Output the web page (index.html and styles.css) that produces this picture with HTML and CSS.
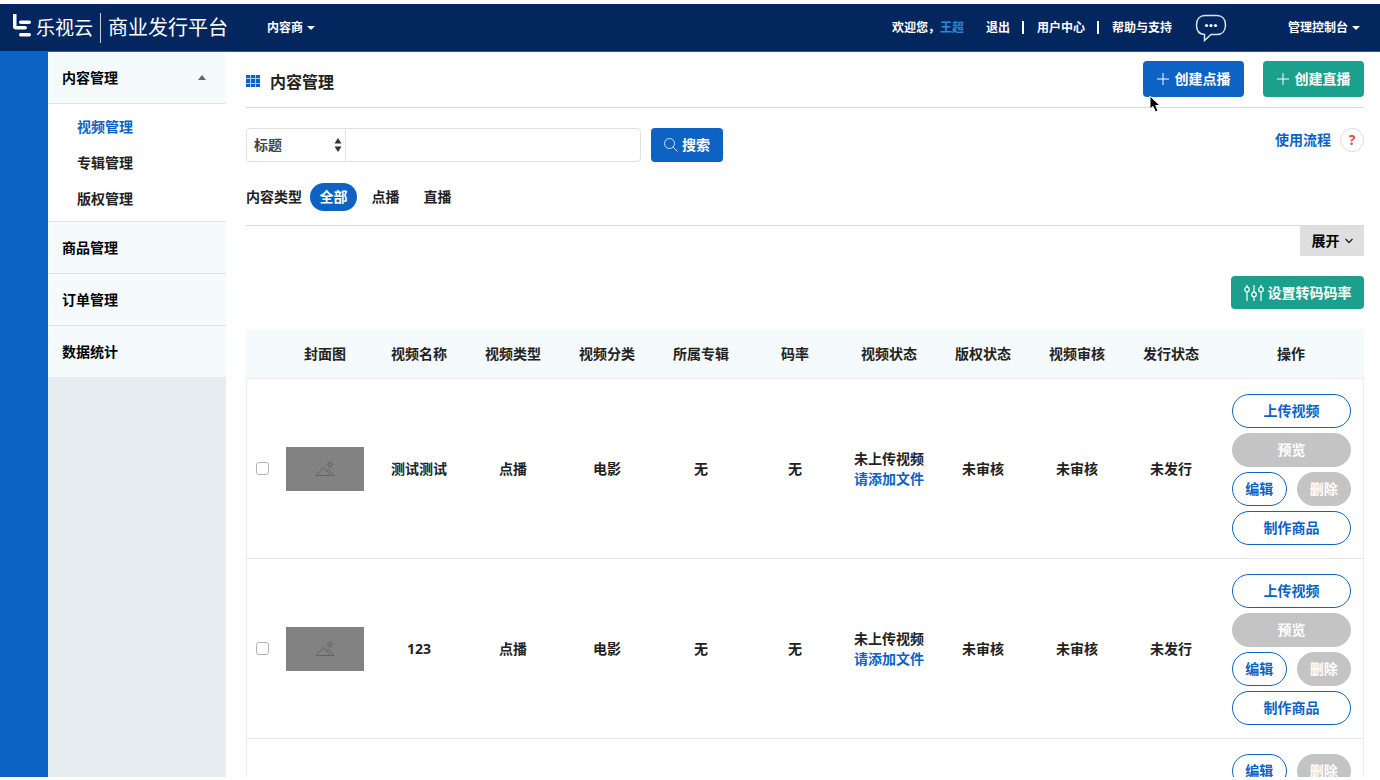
FILE: index.html
```html
<!DOCTYPE html>
<html lang="zh-CN">
<head>
<meta charset="utf-8">
<title>内容管理</title>
<link rel="stylesheet" href="styles.css">
</head>
<body>
<svg class="defs" aria-hidden="true">
  <symbol id="picture" viewBox="0 0 20 16">
    <path d="M1 14.500 8.500 6.500 15.500 14.500ZM11.500 10 13.500 8.500 19 14.500H15.500" />
    <circle cx="15" cy="3.500" r="1.700" />
    <path d="M15 0v1M15 6v1M11.500 3.500h1M17.500 3.500h1M12.500 1l.7.7M16.800 5.300l.7.7M17.500 1l-.7.7M13.200 5.300l-.7.7" />
  </symbol>
</svg>
<header class="topbar">
  <a class="brand" href="#">
    <svg class="brand-mark" viewBox="0 0 20 28" aria-hidden="true"><path d="M1 0H4.500V12H13Q15 12 15 13.700T13 15.500H4Q1 15.500 1 12.500Z"/><rect x="7" y="6.500" width="12" height="3.500" rx="1.700"/><rect x="7" y="19" width="12" height="3.500" rx="1.700"/></svg>
    <span class="brand-name">乐视云</span>
    <span class="brand-product">商业发行平台</span>
  </a>
  <button class="top-menu" type="button">内容商<i class="caret"></i></button>
  <nav class="user-nav">
    <span class="welcome">欢迎您，<a class="user" href="#">王超</a></span>
    <a href="#">退出</a><span class="bar"></span>
    <a href="#">用户中心</a><span class="bar"></span>
    <a href="#">帮助与支持</a>
  </nav>
  <button class="chat" type="button" aria-label="消息">
    <svg viewBox="0 0 32 28" aria-hidden="true"><path class="bubble" d="M10 1.500H22C27 1.500 30.500 5 30.500 11S27 20.500 22 20.500H16L9.500 26.500V20.500C4.500 20.300 1.500 17 1.500 11S5 1.500 10 1.500Z"/><circle cx="11.500" cy="11.500" r="1.600"/><circle cx="16" cy="11.500" r="1.600"/><circle cx="20.500" cy="11.500" r="1.600"/></svg>
  </button>
  <button class="top-menu" type="button">管理控制台<i class="caret"></i></button>
</header>
<div class="shell">
  <div class="rail"></div>
  <nav class="sidebar">
    <a class="section" href="#">内容管理<i class="caret-up"></i></a>
    <div class="submenu">
      <a class="current" href="#">视频管理</a>
      <a href="#">专辑管理</a>
      <a href="#">版权管理</a>
    </div>
    <a class="section" href="#">商品管理</a>
    <a class="section" href="#">订单管理</a>
    <a class="section" href="#">数据统计</a>
  </nav>
  <main class="content">
    <div class="page-head">
      <svg class="grid-icon" viewBox="0 0 14 12" aria-hidden="true"><path d="M0 0h4v3H0zM5 0h4v3H5zM10 0h4v3h-4zM0 4h4v4H0zM5 4h4v4H5zM10 4h4v4h-4zM0 9h4v3H0zM5 9h4v3H5zM10 9h4v3h-4z"/></svg>
      <h1>内容管理</h1>
      <div class="head-actions">
        <button class="btn create" type="button"><svg class="plus" viewBox="0 0 12 12" aria-hidden="true"><path d="M6 0V12M0 6H12"/></svg>创建点播</button>
        <button class="btn create green" type="button"><svg class="plus" viewBox="0 0 12 12" aria-hidden="true"><path d="M6 0V12M0 6H12"/></svg>创建直播</button>
        <svg class="pointer" viewBox="0 0 12 18" aria-hidden="true"><path d="M1 1V14L4 11.500 6.500 17 9 16 6.800 10.500H11Z"/></svg>
      </div>
    </div>
    <form class="search">
      <div class="select-wrap">
        <select aria-label="搜索字段"><option>标题</option></select>
        <svg class="updown" viewBox="0 0 8 14" aria-hidden="true"><path d="M4 0 7.500 5.500H.5ZM4 14 7.500 8.500H.5Z"/></svg>
      </div>
      <input class="keyword" type="text" aria-label="关键词">
      <button class="btn search-btn" type="button"><svg class="lens" viewBox="0 0 14 14" aria-hidden="true"><circle cx="5.500" cy="5.500" r="5"/><path d="M9 9 13.500 13.500"/></svg>搜索</button>
      <div class="help"><a href="#">使用流程</a><button class="help-mark" type="button">?</button></div>
    </form>
    <div class="filters">
      <span>内容类型</span>
      <button class="chip active" type="button">全部</button>
      <button class="chip" type="button">点播</button>
      <button class="chip" type="button">直播</button>
    </div>
    <div class="expand-row">
      <button class="expand" type="button">展开<svg viewBox="0 0 8 6" aria-hidden="true"><path d="M.5 1 4 4.500 7.500 1"/></svg></button>
    </div>
    <div class="tools">
      <button class="btn green rate" type="button"><svg viewBox="0 0 20 16" aria-hidden="true"><path d="M3 0V2M3 7V16M10 0V7M10 12V16M17 0V2M17 7V16"/><circle cx="3" cy="4.500" r="2.300"/><circle cx="10" cy="9.500" r="2.300"/><circle cx="17" cy="4.500" r="2.300"/></svg>设置转码码率</button>
    </div>
    <table class="videos">
      <colgroup><col class="col-check"><col><col><col><col><col><col><col><col><col><col><col class="col-ops"></colgroup>
      <thead>
        <tr><th></th><th>封面图</th><th>视频名称</th><th>视频类型</th><th>视频分类</th><th>所属专辑</th><th>码率</th><th>视频状态</th><th>版权状态</th><th>视频审核</th><th>发行状态</th><th>操作</th></tr>
      </thead>
      <tbody>
        <tr>
          <td><input type="checkbox" aria-label="选择 测试测试"></td>
          <td><div class="thumb"><svg><use href="#picture"/></svg></div></td>
          <td>测试测试</td><td>点播</td><td>电影</td><td>无</td><td>无</td>
          <td>未上传视频<a href="#">请添加文件</a></td>
          <td>未审核</td><td>未审核</td><td>未发行</td>
          <td><div class="ops"><button class="wide" type="button">上传视频</button><button class="wide" type="button" disabled>预览</button><button type="button">编辑</button><button type="button" disabled>删除</button><button class="wide" type="button">制作商品</button></div></td>
        </tr>
        <tr>
          <td><input type="checkbox" aria-label="选择 123"></td>
          <td><div class="thumb"><svg><use href="#picture"/></svg></div></td>
          <td>123</td><td>点播</td><td>电影</td><td>无</td><td>无</td>
          <td>未上传视频<a href="#">请添加文件</a></td>
          <td>未审核</td><td>未审核</td><td>未发行</td>
          <td><div class="ops"><button class="wide" type="button">上传视频</button><button class="wide" type="button" disabled>预览</button><button type="button">编辑</button><button type="button" disabled>删除</button><button class="wide" type="button">制作商品</button></div></td>
        </tr>
        <tr>
          <td></td><td></td><td></td><td></td><td></td><td></td><td></td><td></td><td></td><td></td><td></td>
          <td><div class="ops"><button type="button">编辑</button><button type="button" disabled>删除</button></div></td>
        </tr>
      </tbody>
    </table>
  </main>
</div>
</body>
</html>
```

FILE: styles.css
```css
* { box-sizing: border-box; }

body {
  margin: 0;
  padding: 4px 0 3px;
  height: 100vh;
  display: flex;
  flex-direction: column;
  overflow: hidden;
  background: #fff;
  color: #222;
  font: bold 14px/20px "Noto Sans", "Noto Sans CJK SC", sans-serif;
}

a { color: inherit; text-decoration: none; }
button, input, select { font: inherit; color: inherit; margin: 0; }
button { padding: 0; border: 0; background: none; white-space: nowrap; }
svg { display: block; flex: none; }
.defs { position: absolute; width: 0; height: 0; }

/* Top bar */
.topbar {
  flex: none;
  display: flex;
  align-items: center;
  height: 48px;
  padding: 0 20px 0 12px;
  background: #04265e;
  border-bottom: 1px solid #3d5680;
  color: #fff;
  font-size: 12px;
}
.brand { display: flex; align-items: center; margin-right: 39px; font-weight: 400; }
.brand-mark { width: 20px; height: 28px; margin-right: 4px; fill: #fff; }
.brand-name { padding-right: 7px; border-right: 1px solid #c3cddd; font-size: 19px; line-height: 30px; }
.brand-product { margin-left: 7px; font-size: 20px; }
.top-menu { display: flex; align-items: center; gap: 4px; }
.caret { border: 4px solid transparent; border-top-color: #fff; border-bottom: 0; }
.user-nav { display: flex; align-items: center; margin-left: auto; gap: 12px; }
.welcome { margin-right: 10px; }
.user { color: #2b8ad6; }
.bar { width: 2px; height: 13px; margin-right: 1px; background: #fff; }
.chat { margin: 0 61px 0 23px; }
.chat svg { width: 32px; height: 28px; fill: #fff; }
.chat .bubble { fill: none; stroke: #dce6f3; stroke-width: 1.5; }

/* Frame */
.shell { flex: 1; display: flex; min-height: 0; overflow: hidden; }
.rail { flex: none; width: 48px; background: #0d63c3; }
.sidebar { flex: none; width: 178px; background: #e6edf1; color: #000; }
.section {
  display: flex;
  align-items: center;
  justify-content: space-between;
  height: 52px;
  padding: 0 20px 0 14px;
  border-bottom: 1px solid #dfe3e6;
  background: #f5fafc;
}
.section:last-child { border-bottom-color: #e6edf1; }
.caret-up { border: 4px solid transparent; border-bottom: 5px solid #666; border-top: 0; }
.submenu { padding: 5px 0 4px 29px; border-bottom: 1px solid #dfe3e6; background: #fff; color: #222; }
.submenu a { display: block; line-height: 36px; }
.submenu .current { color: #0d63c3; }

.content { flex: 1; min-width: 0; padding: 0 16px 0 20px; }

/* Page heading */
.page-head { display: flex; align-items: center; height: 56px; padding-top: 2px; border-bottom: 1px solid #d9d9d9; }
.grid-icon { width: 14px; height: 12px; fill: #0d63c3; background: #a5cbf0; }
h1 { margin: 2px 0 0 10px; font-size: 16px; line-height: 24px; }
.head-actions { position: relative; display: flex; gap: 19px; margin-left: auto; padding-bottom: 4px; }
.btn {
  display: flex;
  align-items: center;
  justify-content: center;
  border-radius: 4px;
  background: #0d63c3;
  color: #fff;
}
.green { background: #1ba08e; }
.create { width: 101px; height: 36px; gap: 6px; }
.plus { width: 12px; height: 12px; stroke: #fff; fill: none; }
.pointer { position: absolute; left: 6px; top: 34px; width: 12px; height: 18px; fill: #000; stroke: #fff; }

/* Search */
.search { display: flex; align-items: center; margin-top: 20px; }
.select-wrap { position: relative; width: 100px; }
.search select, .keyword { display: block; height: 34px; border: 1px solid #e0e0e0; background: #fff; color: #444; outline: 0; }
.search select { width: 100%; padding: 0 7px; border-radius: 4px 0 0 4px; appearance: none; }
.updown { position: absolute; right: 4px; top: 10px; width: 8px; height: 14px; fill: #333; pointer-events: none; }
.keyword { width: 296px; margin-left: -1px; padding: 0 8px; border-radius: 0 4px 4px 0; }
.search-btn { width: 72px; height: 34px; margin-left: 10px; gap: 4px; }
.lens { width: 14px; height: 14px; fill: none; stroke: #cfe2f7; }
.help { display: flex; align-items: center; gap: 9px; margin-left: auto; padding-bottom: 10px; color: #0d63c3; }
.help-mark { width: 24px; height: 24px; border: 1px solid #ddd; border-radius: 50%; color: #d9534f; }

/* Filters */
.filters { display: flex; align-items: center; gap: 5px; margin-top: 21px; padding-bottom: 14px; border-bottom: 1px solid #d9d9d9; }
.filters span { margin-right: 3px; }
.chip { width: 47px; height: 28px; border-radius: 14px; }
.active { background: #0d63c3; color: #fff; }
.expand-row, .tools { display: flex; justify-content: flex-end; }
.expand { display: flex; align-items: center; justify-content: center; gap: 5px; width: 64px; height: 30px; background: #dfdfdf; color: #000; }
.expand svg { width: 8px; height: 6px; fill: none; stroke: #222; stroke-width: 1.3; }
.tools { margin: 20px 0; }
.rate { width: 133px; height: 33px; gap: 4px; }
.rate svg { width: 20px; height: 16px; fill: none; stroke: #fff; stroke-width: 1.2; }

/* Table */
.videos { width: 100%; table-layout: fixed; border-collapse: separate; border-spacing: 0; text-align: center; }
.col-check { width: 32px; }
.col-ops { width: 146px; }
.videos th { height: 50px; padding: 0; background: #f5fafc; border-bottom: 1px solid #eceff1; }
.videos td { height: 180px; padding: 0; border-bottom: 1px solid #e8e8e8; }
.videos td:first-child { border-left: 1px solid #ececec; }
.videos td:last-child { padding: 15px 12px 0 14px; border-right: 1px solid #ececec; vertical-align: top; }
.videos td a { display: block; color: #0d63c3; }
.videos input {
  display: block;
  width: 13px;
  height: 13px;
  margin: 0 auto;
  appearance: none;
  border: 1px solid #b5b5b5;
  border-radius: 3px;
  background: #fff;
}
.thumb { display: flex; align-items: center; justify-content: center; width: 78px; height: 44px; margin: 0 auto; background: #828282; }
.thumb svg { width: 20px; height: 16px; fill: none; stroke: #626262; }
.ops { display: grid; grid-template-columns: 1fr 1fr; gap: 5px 10px; }
.ops button { height: 34px; border: 1px solid #0d63c3; border-radius: 17px; background: #fff; color: #0d63c3; }
.ops .wide { grid-column: span 2; }
.ops button:disabled { border-color: #c4c4c4; background: #c4c4c4; color: #fff; }
```
